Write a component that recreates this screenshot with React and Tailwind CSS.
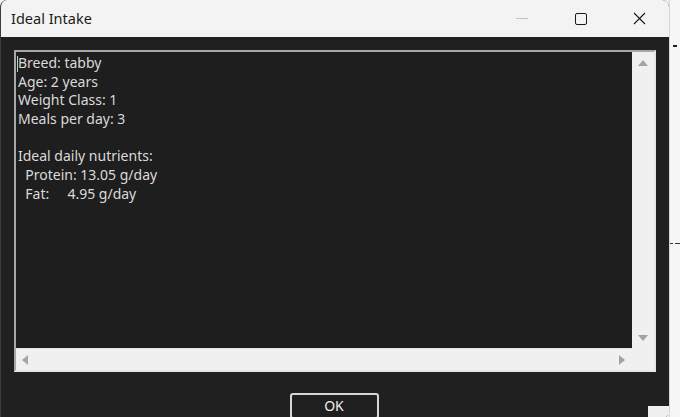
import { useState } from 'react';

const lines = [
  'Breed: tabby',
  'Age: 2 years',
  'Weight Class: 1',
  'Meals per day: 3',
  '',
  'Ideal daily nutrients:',
  '  Protein: 13.05 g/day',
  '  Fat:     4.95 g/day',
];

function Arrow({ dir }) {
  // small filled triangles used by the classic scrollbar
  const pts = {
    up: '0,6 5,0 10,6',
    down: '0,0 10,0 5,6',
    left: '6,0 6,10 0,5',
    right: '0,0 6,5 0,10',
  }[dir];
  const vertical = dir === 'up' || dir === 'down';
  return (
    <svg width={vertical ? 10 : 6} height={vertical ? 6 : 10} viewBox={vertical ? '0 0 10 6' : '0 0 6 10'}>
      <polygon points={pts} fill="#a3a3a3" />
    </svg>
  );
}

export default function App() {
  const [text] = useState(lines);
  return (
    <div className="flex w-[680px] h-[417px] overflow-hidden bg-[#f4f4f4] font-['Noto_Sans','Open_Sans',sans-serif]">
      <div className="flex flex-col w-[669px] h-full rounded-t-[7px] overflow-hidden border-l border-[#3c3c3c] bg-[#202020] shrink-0">
        {/* title bar */}
        <div className="flex items-center h-[37px] bg-[#f3f3f3] shrink-0">
          <span className="pl-[10px] text-[14.5px] text-[#1a1a1a] flex-1">Ideal Intake</span>
          <div className="flex h-full">
            <div className="w-[59px] flex items-center justify-center">
              <div className="w-[12px] h-px bg-[#c4c4c4]" />
            </div>
            <div className="w-[59px] flex items-center justify-center">
              <div className="w-[12px] h-[12px] border border-[#1a1a1a] rounded-[2px]" />
            </div>
            <div className="w-[59px] flex items-center justify-center">
              <svg width="13" height="13" viewBox="0 0 13 13">
                <path d="M1 1 L12 12 M12 1 L1 12" stroke="#1a1a1a" strokeWidth="1.1" />
              </svg>
            </div>
          </div>
        </div>

        {/* body */}
        <div className="relative flex-1 flex flex-col px-[13px] pt-[13px]">
          <div className="flex flex-col h-[322px] border-2 border-t-[#a7a7a7] border-l-[#a7a7a7] border-b-[#e6e6e6] border-r-[#e6e6e6]">
            <div className="flex flex-1 min-h-0">
              <div className="relative flex-1 bg-[#1e1e1e] pl-[2px] pt-[2px] text-[14px] leading-[18.7px] text-[#dadada] whitespace-pre">
                <span className="absolute left-[1px] top-[4px] w-px h-[16px] bg-[#c9d3a4]" />
                {text.map((l, i) => (
                  <div key={i} className="h-[18.7px]">{l}</div>
                ))}
              </div>
              <div className="w-[22px] bg-[#f0f0f0] flex flex-col items-center justify-between pt-[8px] pb-[7px]">
                <Arrow dir="up" />
                <Arrow dir="down" />
              </div>
            </div>
            <div className="flex h-[22px] shrink-0">
              <div className="flex-1 bg-[#f0f0f0] border-t border-[#e2e2e2] flex items-center justify-between pl-[6px] pr-[7px]">
                <Arrow dir="left" />
                <Arrow dir="right" />
              </div>
              <div className="w-[22px] bg-[#f0f0f0]" />
            </div>
          </div>

          <div className="flex justify-center pt-[21px]">
            <button className="ml-[-2px] w-[89px] h-[26px] border-2 border-[#d5d5d5] rounded-[3px] bg-[#1f1f1f] text-[14px] text-[#f0f0f0] leading-[22px]">
              OK
            </button>
          </div>

          {/* resize grip */}
          <div className="absolute right-0 bottom-0 w-[21px] h-[13px] bg-[#f0f0f0]">
            <svg width="21" height="13" viewBox="0 0 21 13" className="block">
              <path d="M20 9 L16 13" stroke="#b8b8b8" strokeWidth="1" />
            </svg>
          </div>
        </div>
      </div>

      {/* sliver of what lies behind the window */}
      <div className="relative flex-1 bg-[#f6f6f6] border-l border-[#d6d6d6]">
        <div className="absolute left-[3px] top-[45px] w-[4px] h-[2px] bg-[#222]" />
        <div className="absolute left-[0px] top-[243px] w-[3px] h-px bg-[#333]" />
        <div className="absolute left-[5px] top-[243px] w-[5px] h-px bg-[#333]" />
      </div>
    </div>
  );
}
